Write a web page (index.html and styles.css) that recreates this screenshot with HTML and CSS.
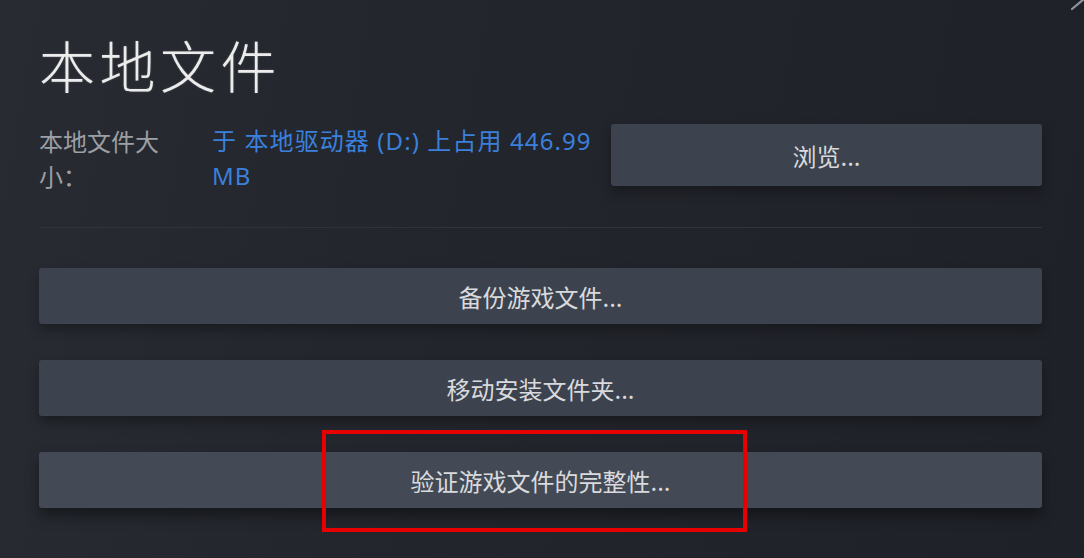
FILE: index.html
```html
<!DOCTYPE html>
<html lang="zh-CN">
<head>
<meta charset="utf-8">
<title>本地文件</title>
<link rel="stylesheet" href="styles.css">
</head>
<body>
<div class="panel">
  <svg class="corner" width="14" height="10" viewBox="0 0 14 10"><line x1="2" y1="9" x2="14" y2="-1" stroke="#8e959e" stroke-width="2.2" stroke-linecap="round"/></svg>
  <h1 class="title">本地文件</h1>
  <div class="info-row">
    <div class="label">本地文件大小：</div>
    <div class="value">于 本地驱动器 (D:) 上占用 446.99 MB</div>
    <button class="btn browse">浏览...</button>
  </div>
  <div class="divider"></div>
  <div class="actions">
    <button class="btn action">备份游戏文件...</button>
    <button class="btn action">移动安装文件夹...</button>
    <div class="highlight-wrap">
      <button class="btn action verify">验证游戏文件的完整性...</button>
      <div class="highlight"></div>
    </div>
  </div>
</div>
</body>
</html>
```

FILE: styles.css
```css
html, body {
  margin: 0;
  padding: 0;
}
body {
  width: 1084px;
  height: 558px;
  overflow: hidden;
  background: linear-gradient(100deg, #282b32 0%, #23262d 35%, #1f2128 100%);
  font-family: "Noto Sans", "Noto Sans CJK SC", sans-serif;
}
.panel {
  position: relative;
  padding: 30px 42px 0 39px;
  height: 558px;
  box-sizing: border-box;
}
.corner {
  position: absolute;
  top: 0;
  right: 0;
}
.title {
  margin: 0;
  font-family: "Noto Sans CJK SC", sans-serif;
  font-size: 56px;
  line-height: 67px;
  font-weight: 300;
  letter-spacing: 4.5px;
  color: #ececec;
  text-shadow: 0 0 2px rgba(255,255,255,0.25);
}
.info-row {
  display: flex;
  align-items: flex-start;
  margin-top: 26px;
}
.label {
  flex: 0 0 135px;
  margin-right: 38px;
  font-family: "Noto Sans CJK SC", sans-serif;
  font-size: 24px;
  line-height: 35px;
  color: #9c9fa4;
}
.value {
  flex: 0 0 382px;
  font-size: 24px;
  line-height: 35px;
  color: #3a80dc;
  letter-spacing: 1.1px;
}
.btn {
  display: block;
  border: none;
  border-radius: 3px;
  background: #3d434e;
  color: #d8dadd;
  font-family: "Noto Sans CJK SC", sans-serif;
  font-size: 24px;
  padding: 0;
  margin: 0;
  box-shadow: 0 6px 12px rgba(0, 0, 0, 0.3);
}
.browse {
  flex: 1;
  height: 62px;
  margin-left: 17px;
  margin-top: 1px;
}
.divider {
  height: 1px;
  margin-top: 34px;
  background: #30333a;
}
.actions {
  display: flex;
  flex-direction: column;
  gap: 36px;
  margin-top: 40px;
}
.action {
  width: 100%;
  height: 56px;
}
.verify {
  background: #444a55;
  box-shadow: 0 8px 14px rgba(0, 0, 0, 0.4);
}
.highlight-wrap {
  position: relative;
}
.highlight {
  position: absolute;
  left: 283px;
  top: -22px;
  width: 425px;
  height: 102px;
  box-sizing: border-box;
  border: 4px solid #e60000;
}
```
